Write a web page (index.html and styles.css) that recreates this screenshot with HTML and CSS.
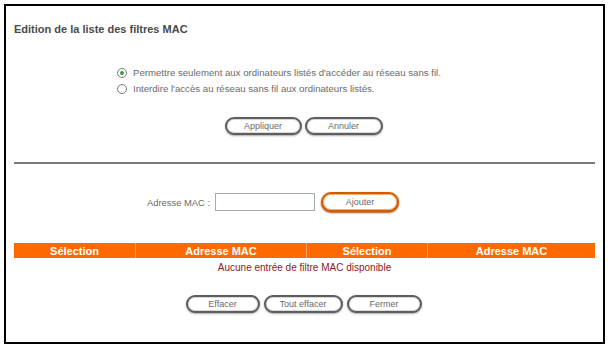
FILE: index.html
```html
<!DOCTYPE html>
<html>
<head>
<meta charset="utf-8">
<link rel="stylesheet" href="styles.css">
</head>
<body>
<div class="frame">
  <div class="title">Edition de la liste des filtres MAC</div>
  <div class="radios">
    <div class="radio-row"><span class="radio checked"></span><span>Permettre seulement aux ordinateurs listés d'accéder au réseau sans fil.</span></div>
    <div class="radio-row"><span class="radio"></span><span>Interdire l'accès au réseau sans fil aux ordinateurs listés.</span></div>
  </div>
  <div class="btn-row top-btns">
    <span class="btn w77">Appliquer</span>
    <span class="btn w78">Annuler</span>
  </div>
  <div class="rule"></div>
  <div class="mac-row">
    <span class="mac-label">Adresse MAC :</span>
    <span class="mac-input"></span>
    <span class="btn orange">Ajouter</span>
  </div>
  <div class="thead">
    <div class="th c1">Sélection</div>
    <div class="th c2">Adresse MAC</div>
    <div class="th c3">Sélection</div>
    <div class="th c4">Adresse MAC</div>
  </div>
  <div class="empty">Aucune entrée de filtre MAC disponible</div>
  <div class="btn-row bottom-btns">
    <span class="btn w74">Effacer</span>
    <span class="btn w79">Tout effacer</span>
    <span class="btn w75">Fermer</span>
  </div>
</div>
</body>
</html>
```
FILE: styles.css
```css
html, body { margin: 0; padding: 0; background: #fff; }
body { font-family: "Liberation Sans", Arial, sans-serif; }
.frame {
  margin: 4px 0 0 4px;
  border: 2px solid #000;
  padding: 0 8px;
  display: flex;
  flex-direction: column;
  box-sizing: border-box;
  width: 601px;
  height: 340px;
}
.title {
  margin-top: 16px;
  font-size: 11px;
  font-weight: bold;
  color: #4a4a4a;
  line-height: 14px;
}
.radios {
  margin-top: 31px;
  margin-left: 103px;
  display: flex;
  flex-direction: column;
  gap: 4px;
}
.radio-row {
  display: flex;
  align-items: center;
  gap: 6px;
  font-size: 9.65px;
  color: #6a6a6a;
  line-height: 12px;
}
.radio {
  width: 8px;
  height: 8px;
  border: 1px solid #7a7a7a;
  border-radius: 50%;
  background: #fff;
  position: relative;
  flex: none;
}
.radio.checked::after {
  content: "";
  position: absolute;
  left: 2px;
  top: 2px;
  width: 4px;
  height: 4px;
  border-radius: 50%;
  background: #3c9a3c;
}
.btn-row {
  display: flex;
  justify-content: center;
  gap: 3px;
}
.top-btns { margin-top: 22px; margin-left: -2px; }
.btn {
  display: flex;
  align-items: center;
  justify-content: center;
  width: 76px;
  height: 18px;
  box-sizing: border-box;
  border: 2px solid #5e5e5e;
  border-radius: 9px;
  background: #fff;
  box-shadow: inset 0 0 0 1px #d8d8d8, 0 1px 2px #aaa;
  font-size: 9px;
  color: #6a6a6a;
}
.w74 { width: 74px; }
.w75 { width: 75px; }
.w77 { width: 77px; }
.w78 { width: 78px; }
.w79 { width: 79px; }
.btn.orange {
  width: 78px;
  height: 20px;
  border-radius: 10px;
  border-color: #d45a00;
  box-shadow: inset 0 0 0 1px #f3b07a, 0 1px 2px #a05020;
}
.rule {
  margin-top: 27px;
  height: 2px;
  background: #7a7a7a;
}
.mac-row {
  margin-top: 28px;
  display: flex;
  align-items: center;
  margin-left: 133px;
}
.mac-label {
  font-size: 9.4px;
  color: #6a6a6a;
  margin-right: 5px;
}
.mac-input {
  width: 100px;
  height: 18px;
  box-sizing: border-box;
  border: 1px solid #a5acb2;
  background: #fff;
  margin-right: 6px;
}
.thead {
  margin-top: 31px;
  display: flex;
  height: 15px;
  background: #ff6a00;
}
.th {
  color: #fff;
  font-weight: bold;
  font-size: 11px;
  display: flex;
  align-items: center;
  justify-content: center;
  border-left: 1px solid #f9a36a;
}
.th.c1 { width: 121px; border-left: 0; }
.th.c2 { width: 170px; }
.th.c3 { width: 120px; }
.th.c4 { flex: 1; }
.empty {
  text-align: center;
  font-size: 10px;
  color: #8b1a1a;
  line-height: 12px;
  margin-top: 4px;
}
.bottom-btns { margin-top: 21px; margin-left: -2px; gap: 4px; }
```
